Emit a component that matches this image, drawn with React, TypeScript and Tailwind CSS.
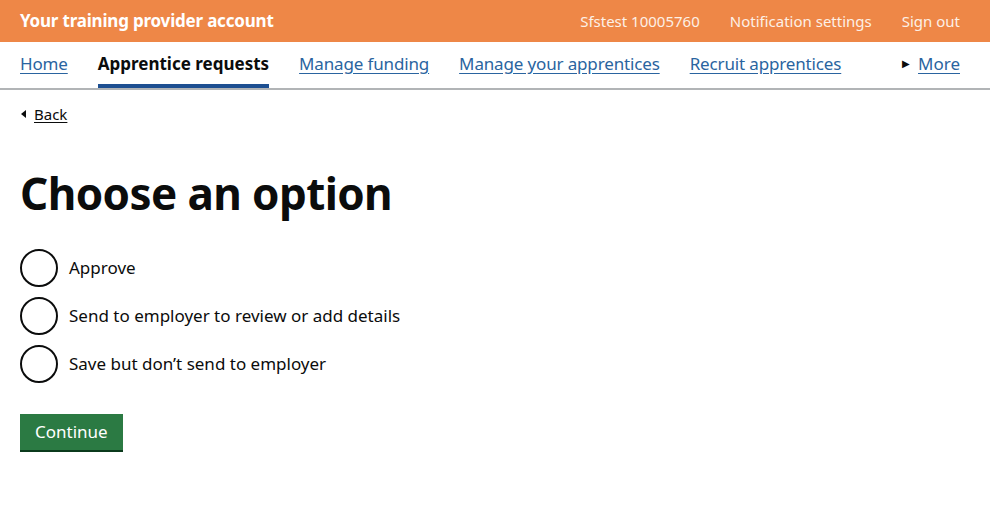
import React from "react";

const font = { fontFamily: '"Noto Sans", Arial, sans-serif' };

export default function App() {
  const navLinks = [
    { label: "Home", active: false },
    { label: "Apprentice requests", active: true },
    { label: "Manage funding", active: false },
    { label: "Manage your apprentices", active: false },
    { label: "Recruit apprentices", active: false },
  ];
  const options = [
    "Approve",
    "Send to employer to review or add details",
    "Save but don’t send to employer",
  ];
  return (
    <div className="w-[990px] h-[526px] bg-white text-[#0b0c0c] overflow-hidden" style={font}>
      <header className="h-[42px] bg-[#ee8747] flex items-center justify-between px-5">
        <span className="text-white font-bold text-[17px] tracking-[-0.2px]">Your training provider account</span>
        <div className="flex items-center gap-[30px] text-[15px] text-[#fdf0e6] pr-[10px]">
          <span>Sfstest 10005760</span>
          <span>Notification settings</span>
          <span>Sign out</span>
        </div>
      </header>
      <nav className="h-[48px] border-b-2 border-[#b1b4b6] flex items-stretch px-5">
        <div className="flex items-stretch gap-[30px]">
          {navLinks.map((l) =>
            l.active ? (
              <span key={l.label} className="flex items-center font-bold text-[17px] border-b-4 border-[#1d4f91] pt-[1px]">
                {l.label}
              </span>
            ) : (
              <span key={l.label} className="flex items-center text-[17px] text-[#2a64a0] underline underline-offset-[3px] pb-[3px] tracking-[-0.15px]">
                {l.label}
              </span>
            )
          )}
        </div>
        <div className="ml-auto flex items-center gap-[8px] pr-[10px] pb-[3px]">
          <span className="text-[10px] text-[#0b0c0c]">▶</span>
          <span className="text-[17px] text-[#2a64a0] underline underline-offset-[3px]">More</span>
        </div>
      </nav>
      <main className="px-5">
        <div className="flex items-center gap-[8px] mt-[13px] text-[15px]">
          <span className="inline-block w-0 h-0 border-y-[4px] border-y-transparent border-r-[5px] border-r-[#0b0c0c] ml-[1px]" />
          <span className="underline underline-offset-[2px]">Back</span>
        </div>
        <h1 className="text-[44px] font-bold leading-none mt-[45px] tracking-[-0.6px]">Choose an option</h1>
        <div className="mt-[34px] flex flex-col gap-[10px]">
          {options.map((o) => (
            <div key={o} className="flex items-center gap-[11px]">
              <span className="w-[38px] h-[38px] rounded-full border-[2.5px] border-[#0b0c0c] shrink-0" />
              <span className="text-[17px]">{o}</span>
            </div>
          ))}
        </div>
        <button className="mt-[31px] bg-[#2b7a43] text-white text-[17px] px-[15px] h-[36px] shadow-[0_2px_0_#0b3a1c]">
          Continue
        </button>
      </main>
    </div>
  );
}
